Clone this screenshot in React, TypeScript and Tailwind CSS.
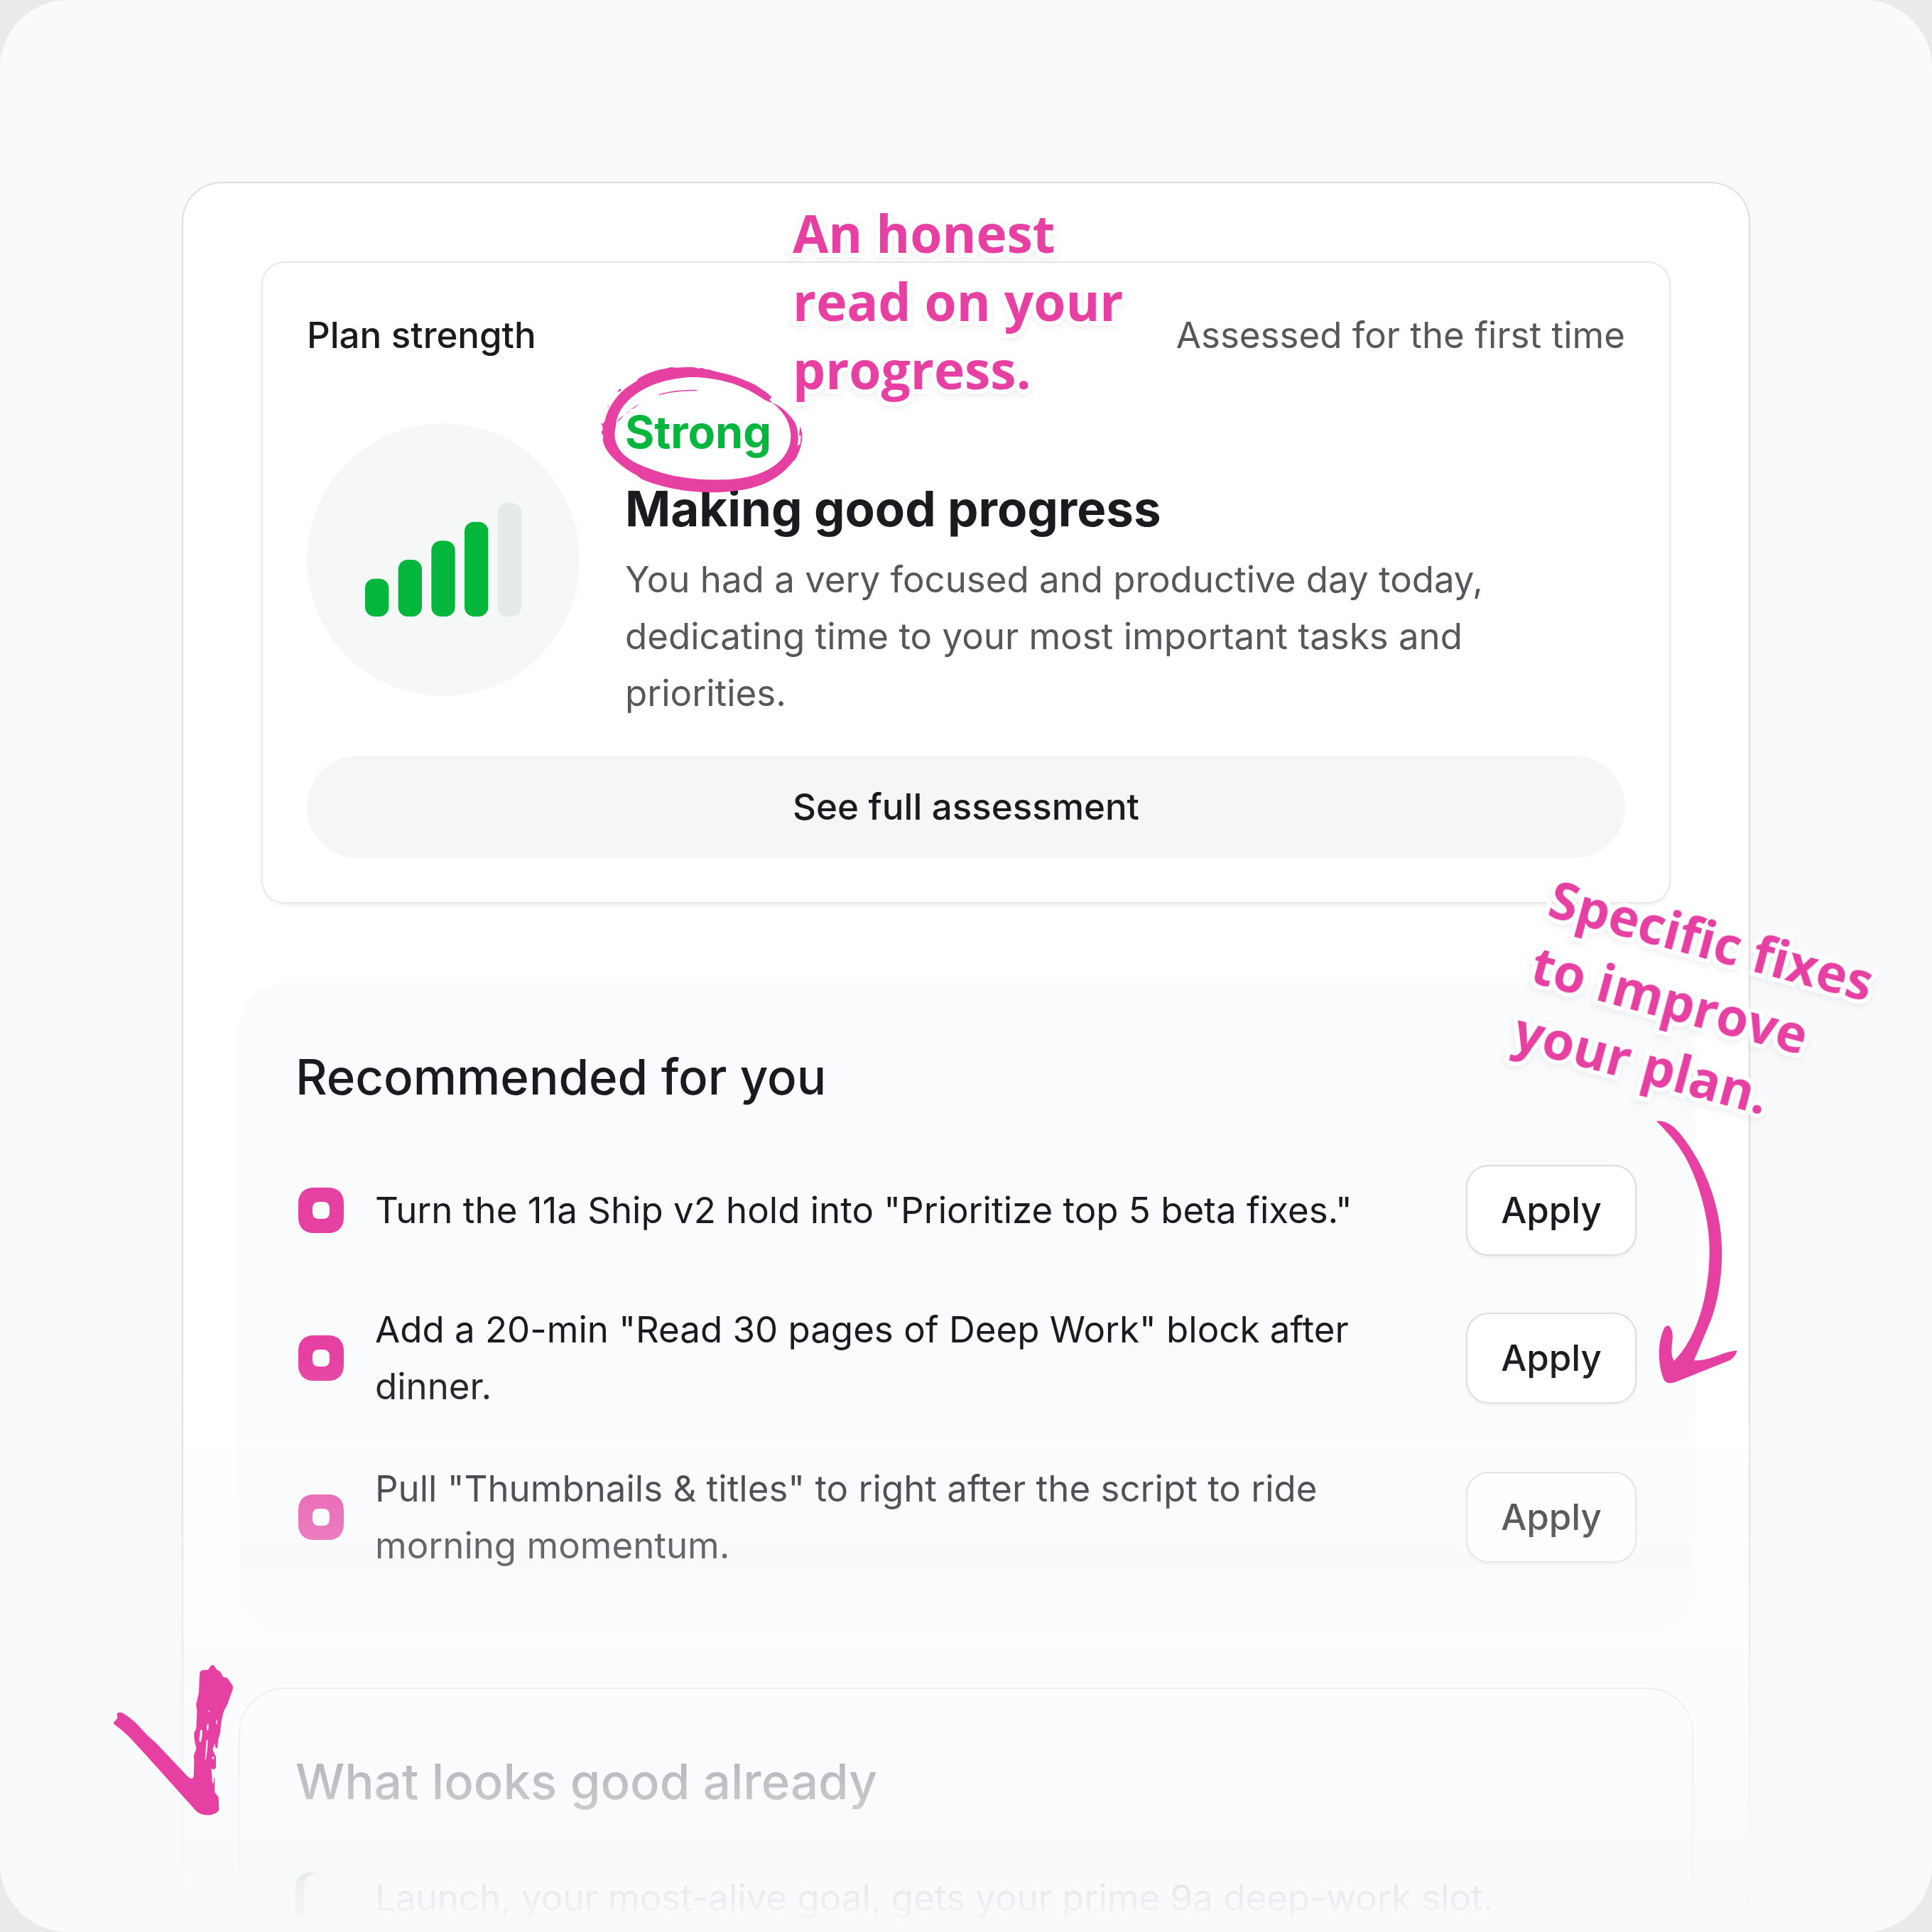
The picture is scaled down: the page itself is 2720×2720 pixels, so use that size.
import React from 'react';

interface Recommendation {
  id: string;
  text: string;
}

const recommendations: Recommendation[] = [
  { id: 'hold', text: 'Turn the 11a Ship v2 hold into "Prioritize top 5 beta fixes."' },
  { id: 'reading', text: 'Add a 20-min "Read 30 pages of Deep Work" block after dinner.' },
  { id: 'momentum', text: 'Pull "Thumbnails & titles" to right after the script to ride morning momentum.' },
];

const noteClass =
  'absolute font-["Open_Sans",sans-serif] text-[73px] leading-[96px] font-bold text-[#e540a2] whitespace-nowrap [-webkit-text-stroke:12px_white] [paint-order:stroke_fill] drop-shadow-[0_4px_4px_rgba(0,0,0,0.06)]';

const StrengthBars = () => (
  <svg viewBox="0 0 33 24" className="w-[220px] h-40" role="img" aria-label="4 out of 5">
    <rect x="0" y="16" width="5" height="8" rx="2" fill="#05b63c" />
    <rect x="7" y="12" width="5" height="12" rx="2" fill="#05b63c" />
    <rect x="14" y="8" width="5" height="16" rx="2" fill="#05b63c" />
    <rect x="21" y="4" width="5" height="20" rx="2" fill="#05b63c" />
    <rect x="28" y="0" width="5" height="24" rx="2" fill="#e6eae9" />
  </svg>
);

const GoalIcon = () => (
  <svg viewBox="0 0 72 72" className="w-[72px] h-[72px] shrink-0" aria-hidden="true">
    <path
      fill="#e540a2"
      fillRule="evenodd"
      d="M26 4H46C60 4 68 12 68 26V46C68 60 60 68 46 68H26C12 68 4 60 4 46V26C4 12 12 4 26 4ZM34 24C27 24 24 27 24 34V38C24 45 27 48 34 48H38C45 48 48 45 48 38V34C48 27 45 24 38 24Z"
    />
  </svg>
);

const CircleScribble = () => (
  <svg viewBox="0 0 1020 720" className="absolute -left-[60px] -top-20 w-[340px] h-60 max-w-none" fill="#e540a2" aria-hidden="true">
    <path
      fillRule="evenodd"
      d="M803 262L790 248L800 238C780 216 755 204 735 188C700 170 650 150 620 143C590 134 560 130 535 121L518 119L505 114L490 116L470 111L440 110L400 113L375 111L350 117C310 122 265 140 237 158L228 170C190 192 165 212 150 232C120 268 100 305 95 340L84 352L86 375L79 385L88 402L86 420C93 450 105 465 122 487C155 522 195 550 230 568L248 583C330 618 430 639 545 640C640 638 700 628 750 610C830 580 880 528 905 485L912 455L908 440C914 410 911 380 900 348C880 315 840 275 803 262ZM803 262C850 300 880 345 880 405C878 500 780 584 590 586C480 588 380 575 300 545C200 512 136 470 136 390L142 350C155 245 290 153 480 153C610 160 690 195 760 243C775 254 790 258 803 262Z"
    />
    <path d="M919 360C931 390 932 420 918 458C906 490 900 500 893 508L900 470L912 440L920 436L923 400L915 398Z" />
    <path d="M321 226C370 210 420 206 484 206V211C420 211 375 216 323 229Z" />
    <path d="M144 345C150 332 160 322 176 314C165 324 155 338 144 345ZM188 304L202 293L190 306ZM204 291C215 280 225 274 239 267C228 278 216 285 204 291Z" />
    <path d="M148 216L155 204L166 203L158 213ZM106 276L111 274L108 283ZM79 350L84 346L82 362Z" />
  </svg>
);

const ArrowScribble = () => (
  <svg viewBox="0 0 540 1260" className="absolute right-60 top-[1550px] w-[180px] h-[420px]" fill="#e540a2" aria-hidden="true">
    <path d="M96 85C132 82 165 98 200 143C290 255 372 430 373 640C372 780 345 890 310 965L255 1096C330 1098 370 1060 437 1054C432 1072 422 1086 405 1096L180 1186C158 1195 138 1194 128 1178C102 1120 98 1020 130 958C140 945 150 945 157 960C178 1000 145 1050 170 1098C270 1000 322 810 320 620C318 500 280 360 230 260C192 185 145 135 96 85Z" />
  </svg>
);

const CheckScribble = () => (
  <svg viewBox="0 0 660 780" className="absolute left-[140px] top-[2320px] w-[220px] h-[260px]" fill="#e540a2" aria-hidden="true">
    <path
      fillRule="evenodd"
      d="M60 315L76 297L74 278Q80 269 96 274Q128 292 155 318L200 367L240 403L372 542Q388 560 398 546L400 470L398 455L409 425L400 380V358L409 340L412 265L408 240L420 190L423 110Q425 95 438 94L458 93L471 76Q478 68 486 77L497 94L510 100L522 122L540 127L562 158Q566 168 562 178L540 240L525 268L515 310L510 360L502 385L498 425L491 422L486 404L478 430L492 460V505L486 514L473 510L477 572L482 571L484 546L487 552V610L503 630L505 685C490 712 430 715 405 685L230 490L130 380Q98 348 60 320ZM426 348L434 346L434 372L428 398L421 392ZM456 322L461 321L460 345L455 350L453 335ZM495 302L498 305L496 326L492 318ZM452 390L458 388L456 425L450 470L446 472L449 430ZM476 461L481 458L485 464L481 471L476 468ZM461 265L465 265L465 271L461 271Z"
    />
  </svg>
);

const StrengthCard = () => (
  <section className="mx-8 rounded-[32px] bg-white p-16 shadow-[inset_0_0_0_2px_#e6eae9,0_3px_5px_rgba(0,0,0,0.06)]">
    <div className="flex items-center justify-between leading-20">
      <h2 className="font-medium">Plan strength</h2>
      <p className="text-[#55575a]">Assessed for the first time</p>
    </div>
    <div className="mt-12 flex items-center gap-16">
      <div className="flex size-96 shrink-0 items-center justify-center rounded-full bg-[#f6f8f8]">
        <StrengthBars />
      </div>
      <div>
        <div className="relative w-fit text-[63px] leading-24 font-bold text-[#05b63c]">
          Strong
          <CircleScribble />
        </div>
        <h3 className="mt-3 text-[69px] leading-24 font-bold">Making good progress</h3>
        <p className="mt-3 max-w-[1320px] leading-20 text-[#55575a]">
          You had a very focused and productive day today, dedicating time to your most important tasks and priorities.
        </p>
      </div>
    </div>
    <button type="button" className="mt-12 h-36 w-full rounded-full bg-[#f5f7f7] font-medium">
      See full assessment
    </button>
  </section>
);

export default function App() {
  return (
    <div className="h-screen bg-[#e9ebea]">
      <main className="relative h-full overflow-hidden rounded-[96px] bg-[#f9fafc] font-[Inter,sans-serif] text-[51px] text-[#1a1b1e]">
        {/* everything in here fades out towards the bottom edge */}
        <div className="h-full overflow-hidden px-64 pt-64 [mask-image:linear-gradient(to_bottom,black_70%,transparent)]">
          <div className="rounded-[56px] bg-white px-20 pt-28 pb-20 shadow-[inset_0_0_0_2px_#dddde2,0_4px_12px_rgba(0,0,0,0.03)]">
            <StrengthCard />

            <section className="mt-28 rounded-[64px] bg-[#fafbfd] p-20 shadow-[0_2px_4px_rgba(0,0,0,0.03)]">
              <h2 className="text-[69px] leading-[104px] font-medium">Recommended for you</h2>
              <ul className="mt-18 flex flex-col gap-16">
                {recommendations.map(item => (
                  <li key={item.id} className="flex items-center gap-10">
                    <GoalIcon />
                    <p className="flex-1 leading-20">
                      <span className="block max-w-[1400px]">{item.text}</span>
                    </p>
                    <button
                      type="button"
                      className="h-32 w-60 rounded-[32px] border-2 border-[#dddde0] bg-white font-medium shadow-[0_3px_4px_rgba(0,0,0,0.05)]"
                    >
                      Apply
                    </button>
                  </li>
                ))}
              </ul>
            </section>

            <section className="mt-20 rounded-[64px] p-20 shadow-[inset_0_0_0_2px_#dddfe0]">
              <h2 className="text-[69px] leading-[104px] font-medium">What looks good already</h2>
              <ul className="mt-18">
                <li className="flex items-center gap-10">
                  <span className="size-[72px] shrink-0 rounded-[20px] bg-[#f4f7f0] shadow-[inset_12px_0_0_#5a6b62]" />
                  <p className="leading-20">Launch, your most-alive goal, gets your prime 9a deep-work slot.</p>
                </li>
              </ul>
            </section>
          </div>
        </div>

        <p className={`${noteClass} left-[1116px] top-[280px]`}>
          An honest
          <br />
          read on your
          <br />
          progress.
        </p>
        <p className={`${noteClass} left-[2196px] top-[1216px] origin-top-left rotate-15`}>
          Specific fixes
          <br />
          to improve
          <br />
          your plan.
        </p>
        <ArrowScribble />
        <CheckScribble />
      </main>
    </div>
  );
}
